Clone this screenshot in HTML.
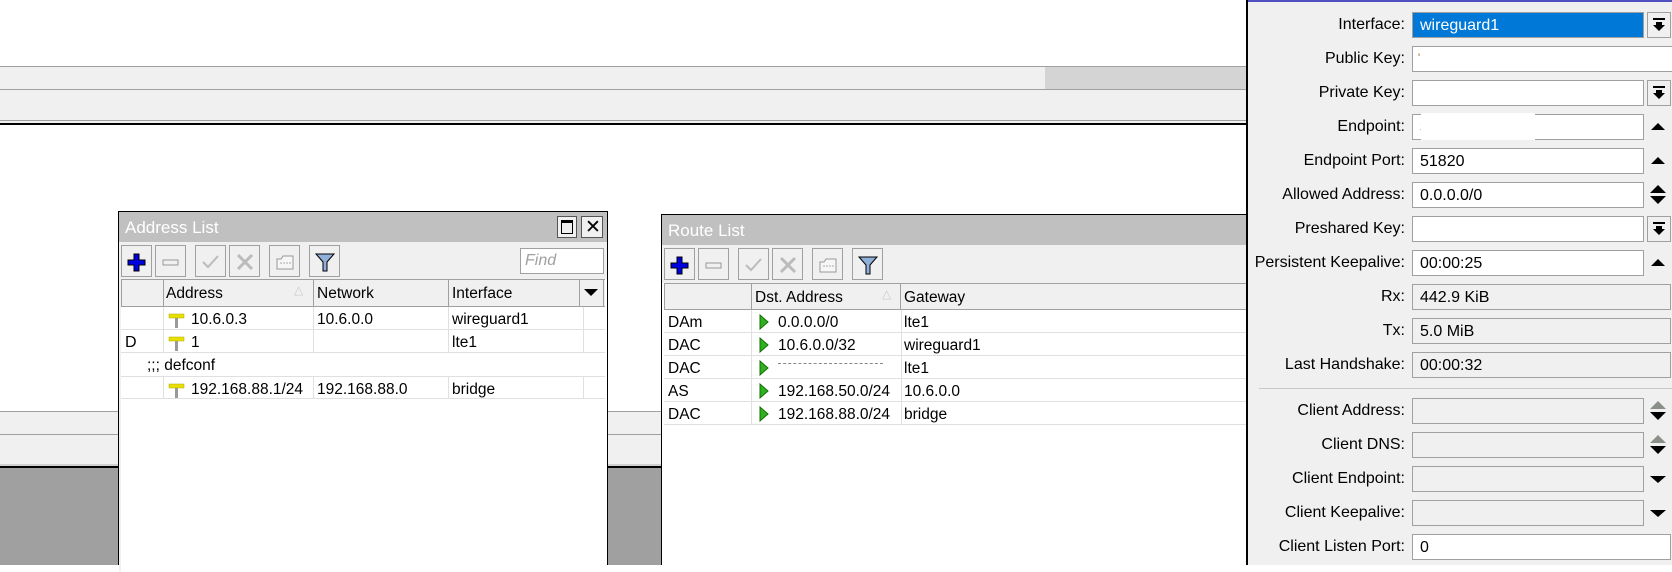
<!DOCTYPE html>
<html><head><meta charset="utf-8"><style>
*{margin:0;padding:0;box-sizing:border-box}
body{width:1672px;height:565px;position:relative;overflow:hidden;background:#fff;font-family:"Liberation Sans",sans-serif;font-size:15.5px;color:#000}
div,span{position:absolute}
.t{white-space:nowrap;line-height:1}
.btn{width:31px;height:32px;border:1px solid #a0a0a0;background:#f0f0f0}
.btn svg{position:absolute;left:4px;top:5px}
.hd{background:#f0f0f0;border-right:1px solid #a0a0a0;border-bottom:1px solid #a0a0a0;height:100%}
.lbl{right:267px;font-size:16px;white-space:nowrap;line-height:1}
.f{left:1412px;height:26px;border:1px solid #a0a0a0;background:#fff;font-size:16px;padding:4px 0 0 7px;white-space:nowrap}
.g{background:#f0f0f0}
.dd{left:1647px;width:24px;height:26px;border:1px solid #a0a0a0;background:#f0f0f0}
</style></head><body>
<div style="left:0;top:66px;width:1672px;height:1px;background:#a0a0a0"></div>
<div style="left:0;top:67px;width:1672px;height:22px;background:#f0f0f0"></div>
<div style="left:1045px;top:67px;width:210px;height:22px;background:#d4d4d4"></div>
<div style="left:0;top:89px;width:1672px;height:1px;background:#a0a0a0"></div>
<div style="left:0;top:90px;width:1672px;height:30px;background:#f0f0f0"></div>
<div style="left:0;top:120px;width:1672px;height:1px;background:#a0a0a0"></div>
<div style="left:0;top:121px;width:1672px;height:2px;background:#f0f0f0"></div>
<div style="left:0;top:123px;width:1672px;height:2px;background:#000"></div>
<div style="left:0;top:411px;width:1672px;height:1px;background:#a0a0a0"></div>
<div style="left:0;top:412px;width:1672px;height:22px;background:#f0f0f0"></div>
<div style="left:0;top:434px;width:1672px;height:1px;background:#a0a0a0"></div>
<div style="left:0;top:435px;width:1672px;height:29px;background:#f0f0f0"></div>
<div style="left:0;top:464px;width:1672px;height:2px;background:#d0d0d0"></div>
<div style="left:0;top:466px;width:1672px;height:2px;background:#000"></div>
<div style="left:0;top:468px;width:1672px;height:97px;background:#a0a0a0"></div>

<div style="left:118px;top:211px;width:490px;height:354px;border:1px solid #000;border-bottom:none;background:#fff">
 <div style="left:0;top:0;width:488px;height:30px;background:#c0c0c0"></div>
 <span class="t" style="left:6px;top:7px;font-size:17px;color:#fff">Address List</span>
 <div style="left:438px;top:4px;width:20px;height:22px;border:1px solid #555;background:#f0f0f0"><div style="left:3px;top:3px;width:12px;height:14px;border:1px solid #000;border-top-width:3px"></div></div>
 <div style="left:462px;top:4px;width:22px;height:22px;border:1px solid #555;background:#f0f0f0"><span class="t" style="left:3px;top:1px;font-size:19px">✕</span></div>
 <div style="left:0;top:30px;width:488px;height:37px;background:#f0f0f0"></div>
 <div class="btn" style="left:2px;top:33px"><svg width="22" height="22"><path d="M8 3h5v6h6v5h-6v6h-5v-6h-6v-5h6z" fill="#0000e0" stroke="#000" stroke-width="1"/></svg></div>
 <div class="btn" style="left:36px;top:33px"><svg width="22" height="22"><rect x="3" y="9" width="15" height="5" fill="#f0f0f0" stroke="#999"/></svg></div>
 <div class="btn" style="left:76px;top:33px"><svg width="22" height="22"><path d="M3 11l5 5 10-11" fill="none" stroke="#bbb" stroke-width="2"/></svg></div>
 <div class="btn" style="left:110px;top:33px"><svg width="22" height="22"><path d="M4 4l14 14M18 4L4 18" stroke="#bbb" stroke-width="3"/></svg></div>
 <div class="btn" style="left:150px;top:33px"><svg width="22" height="22"><path d="M3 8h4l2-3h10v13H3z" fill="#f6f6f6" stroke="#999"/><path d="M6 12h11" stroke="#aaa" stroke-dasharray="2 1"/></svg></div>
 <div class="btn" style="left:190px;top:33px"><svg width="22" height="22"><path d="M2 3h18l-7 8v9h-4v-9z" fill="#8fb0d8" stroke="#000"/></svg></div>
 <div style="left:401px;top:36px;width:84px;height:26px;border:1px solid #a0a0a0;background:#fff"><span class="t" style="left:4px;top:4px;font-style:italic;color:#a0a0a0;font-size:16px">Find</span></div>
 <div style="left:2px;top:67px;width:484px;height:28px;border:1px solid #a0a0a0;border-right:none;background:#f0f0f0"></div>
 <div style="left:3px;top:68px;width:42px;height:27px" class="hd"></div>
 <div style="left:45px;top:68px;width:150px;height:27px" class="hd"><span class="t" style="left:2px;top:6px">Address</span><span class="t" style="left:130px;top:4px;color:#ccc;font-size:12px">△</span></div>
 <div style="left:195px;top:68px;width:135px;height:27px" class="hd"><span class="t" style="left:3px;top:6px">Network</span></div>
 <div style="left:330px;top:68px;width:131px;height:27px" class="hd"><span class="t" style="left:3px;top:6px">Interface</span></div>
 <div style="left:461px;top:68px;width:24px;height:27px" class="hd"><svg style="position:absolute;left:4px;top:9px" width="14" height="8"><path d="M0 0h14L7 7z"/></svg></div>
 <div style="left:2px;top:117px;width:484px;height:1px;background:#e0e0e0"></div>
 <div style="left:2px;top:140px;width:484px;height:1px;background:#e0e0e0"></div>
 <div style="left:2px;top:164px;width:484px;height:1px;background:#e0e0e0"></div>
 <div style="left:2px;top:186px;width:484px;height:1px;background:#e0e0e0"></div>
 <div style="left:44px;top:95px;width:1px;height:22px;background:#e0e0e0"></div>
 <div style="left:44px;top:117px;width:1px;height:23px;background:#e0e0e0"></div>
 <div style="left:44px;top:164px;width:1px;height:23px;background:#e0e0e0"></div>
 <div style="left:194px;top:95px;width:1px;height:46px;background:#e0e0e0"></div>
 <div style="left:194px;top:164px;width:1px;height:23px;background:#e0e0e0"></div>
 <div style="left:329px;top:95px;width:1px;height:46px;background:#e0e0e0"></div>
 <div style="left:329px;top:164px;width:1px;height:23px;background:#e0e0e0"></div>
 <div style="left:464px;top:95px;width:1px;height:46px;background:#e0e0e0"></div>
 <div style="left:464px;top:164px;width:1px;height:23px;background:#e0e0e0"></div>
 <svg style="position:absolute;left:49px;top:99px" width="18" height="18"><rect x="7" y="5" width="3" height="12" fill="#999"/><rect x="1" y="3" width="15" height="4" fill="#e8e000" stroke="#b0a800" stroke-width=".5"/></svg>
 <span class="t" style="left:72px;top:100px">10.6.0.3</span><span class="t" style="left:198px;top:100px">10.6.0.0</span><span class="t" style="left:333px;top:100px">wireguard1</span>
 <span class="t" style="left:6px;top:123px;font-size:16px">D</span>
 <svg style="position:absolute;left:49px;top:122px" width="18" height="18"><rect x="7" y="5" width="3" height="12" fill="#999"/><rect x="1" y="3" width="15" height="4" fill="#e8e000" stroke="#b0a800" stroke-width=".5"/></svg>
 <span class="t" style="left:72px;top:123px">1</span><span class="t" style="left:333px;top:123px">lte1</span>
 <span class="t" style="left:28px;top:146px">;;; defconf</span>
 <svg style="position:absolute;left:49px;top:169px" width="18" height="18"><rect x="7" y="5" width="3" height="12" fill="#999"/><rect x="1" y="3" width="15" height="4" fill="#e8e000" stroke="#b0a800" stroke-width=".5"/></svg>
 <span class="t" style="left:72px;top:170px">192.168.88.1/24</span><span class="t" style="left:198px;top:170px">192.168.88.0</span><span class="t" style="left:333px;top:170px">bridge</span>
 <div style="left:0;top:30px;width:2px;height:330px;background:#f0f0f0"></div>
</div>

<div style="left:661px;top:214px;width:600px;height:351px;border:1px solid #000;border-bottom:none;background:#fff">
 <div style="left:0;top:0;width:600px;height:30px;background:#c0c0c0"></div>
 <span class="t" style="left:6px;top:7px;font-size:17px;color:#fff">Route List</span>
 <div style="left:0;top:30px;width:600px;height:38px;background:#f0f0f0"></div>
 <div class="btn" style="left:2px;top:33px"><svg width="22" height="22"><path d="M8 3h5v6h6v5h-6v6h-5v-6h-6v-5h6z" fill="#0000e0" stroke="#000" stroke-width="1"/></svg></div>
 <div class="btn" style="left:36px;top:33px"><svg width="22" height="22"><rect x="3" y="9" width="15" height="5" fill="#f0f0f0" stroke="#999"/></svg></div>
 <div class="btn" style="left:76px;top:33px"><svg width="22" height="22"><path d="M3 11l5 5 10-11" fill="none" stroke="#bbb" stroke-width="2"/></svg></div>
 <div class="btn" style="left:110px;top:33px"><svg width="22" height="22"><path d="M4 4l14 14M18 4L4 18" stroke="#bbb" stroke-width="3"/></svg></div>
 <div class="btn" style="left:150px;top:33px"><svg width="22" height="22"><path d="M3 8h4l2-3h10v13H3z" fill="#f6f6f6" stroke="#999"/><path d="M6 12h11" stroke="#aaa" stroke-dasharray="2 1"/></svg></div>
 <div class="btn" style="left:190px;top:33px"><svg width="22" height="22"><path d="M2 3h18l-7 8v9h-4v-9z" fill="#8fb0d8" stroke="#000"/></svg></div>
 <div style="left:2px;top:68px;width:598px;height:27px;border:1px solid #a0a0a0;border-right:none;background:#f0f0f0"></div>
 <div style="left:3px;top:69px;width:87px;height:26px" class="hd"></div>
 <div style="left:90px;top:69px;width:149px;height:26px" class="hd"><span class="t" style="left:3px;top:6px">Dst. Address</span><span class="t" style="left:130px;top:4px;color:#ccc;font-size:12px">△</span></div>
 <span class="t" style="left:242px;top:75px">Gateway</span>
 <div style="left:89px;top:95px;width:1px;height:115px;background:#e0e0e0"></div>
 <div style="left:239px;top:95px;width:1px;height:115px;background:#e0e0e0"></div>
 <div style="left:2px;top:117px;width:598px;height:1px;background:#e0e0e0"></div>
 <div style="left:2px;top:140px;width:598px;height:1px;background:#e0e0e0"></div>
 <div style="left:2px;top:163px;width:598px;height:1px;background:#e0e0e0"></div>
 <div style="left:2px;top:186px;width:598px;height:1px;background:#e0e0e0"></div>
 <div style="left:2px;top:209px;width:598px;height:1px;background:#e0e0e0"></div>
 <span class="t" style="left:6px;top:100px">DAm</span><svg style="position:absolute;left:97px;top:99px" width="10" height="16"><path d="M1 1l8 7-8 7z" fill="#30b020" stroke="#107000"/></svg><span class="t" style="left:116px;top:100px">0.0.0.0/0</span><span class="t" style="left:242px;top:100px">lte1</span>
 <span class="t" style="left:6px;top:123px">DAC</span><svg style="position:absolute;left:97px;top:122px" width="10" height="16"><path d="M1 1l8 7-8 7z" fill="#30b020" stroke="#107000"/></svg><span class="t" style="left:116px;top:123px">10.6.0.0/32</span><span class="t" style="left:242px;top:123px">wireguard1</span>
 <span class="t" style="left:6px;top:146px">DAC</span><svg style="position:absolute;left:97px;top:145px" width="10" height="16"><path d="M1 1l8 7-8 7z" fill="#30b020" stroke="#107000"/></svg><div style="left:116px;top:148px;width:105px;height:1px;border-top:1px dashed #888"></div><span class="t" style="left:242px;top:146px">lte1</span>
 <span class="t" style="left:6px;top:169px">AS</span><svg style="position:absolute;left:97px;top:168px" width="10" height="16"><path d="M1 1l8 7-8 7z" fill="#30b020" stroke="#107000"/></svg><span class="t" style="left:116px;top:169px">192.168.50.0/24</span><span class="t" style="left:242px;top:169px">10.6.0.0</span>
 <span class="t" style="left:6px;top:192px">DAC</span><svg style="position:absolute;left:97px;top:191px" width="10" height="16"><path d="M1 1l8 7-8 7z" fill="#30b020" stroke="#107000"/></svg><span class="t" style="left:116px;top:192px">192.168.88.0/24</span><span class="t" style="left:242px;top:192px">bridge</span>
</div>

<div style="left:1246px;top:0;width:426px;height:565px;background:#f0f0f0;border-left:2px solid #000"></div>
<div style="left:1248px;top:0;width:424px;height:2px;background:#5050c0"></div>
<span class="lbl" style="top:17px">Interface:</span>
<div class="f" style="top:12px;width:232px;background:#0078d7;color:#fff;border-color:#a0a0a0">wireguard1</div>
<div class="dd" style="top:12px"><svg style="position:absolute;left:5px;top:5px" width="12" height="14"><rect x="0" y="0" width="12" height="2"/><path d="M3 4h6v3h3l-6 6-6-6h3z"/></svg></div>
<span class="lbl" style="top:51px">Public Key:</span>
<div class="f" style="top:46px;width:260px;border-right:none"><span class="t" style="left:5px;top:6px;font-size:11px;color:#a06000">'</span></div>
<span class="lbl" style="top:85px">Private Key:</span>
<div class="f" style="top:80px;width:232px"></div>
<div class="dd" style="top:80px"><svg style="position:absolute;left:5px;top:5px" width="12" height="14"><rect x="0" y="0" width="12" height="2"/><path d="M3 4h6v3h3l-6 6-6-6h3z"/></svg></div>
<span class="lbl" style="top:119px">Endpoint:</span>
<div class="f" style="top:114px;width:232px">3</div>
<div style="left:1421px;top:113px;width:114px;height:27px;background:#fff"></div>
<svg style="position:absolute;left:1651px;top:122px" width="14" height="10"><path d="M0 8h14L7 1z"/></svg>
<span class="lbl" style="top:153px">Endpoint Port:</span>
<div class="f" style="top:148px;width:232px">51820</div>
<svg style="position:absolute;left:1651px;top:156px" width="14" height="10"><path d="M0 8h14L7 1z"/></svg>
<span class="lbl" style="top:187px">Allowed Address:</span>
<div class="f" style="top:182px;width:232px">0.0.0.0/0</div>
<svg style="position:absolute;left:1650px;top:184px" width="16" height="22"><path d="M0 9h16L8 1zM0 12h16L8 20z"/></svg>
<span class="lbl" style="top:221px">Preshared Key:</span>
<div class="f" style="top:216px;width:232px"></div>
<div class="dd" style="top:216px"><svg style="position:absolute;left:5px;top:5px" width="12" height="14"><rect x="0" y="0" width="12" height="2"/><path d="M3 4h6v3h3l-6 6-6-6h3z"/></svg></div>
<span class="lbl" style="top:255px">Persistent Keepalive:</span>
<div class="f" style="top:250px;width:232px">00:00:25</div>
<svg style="position:absolute;left:1651px;top:258px" width="14" height="10"><path d="M0 8h14L7 1z"/></svg>
<span class="lbl" style="top:289px">Rx:</span>
<div class="f g" style="top:284px;width:259px">442.9 KiB</div>
<span class="lbl" style="top:323px">Tx:</span>
<div class="f g" style="top:318px;width:259px">5.0 MiB</div>
<span class="lbl" style="top:357px">Last Handshake:</span>
<div class="f g" style="top:352px;width:259px">00:00:32</div>
<div style="left:1259px;top:388px;width:413px;height:1px;background:#c8c8c8"></div>
<span class="lbl" style="top:403px">Client Address:</span>
<div class="f g" style="top:398px;width:232px"></div>
<svg style="position:absolute;left:1650px;top:400px" width="16" height="22"><path d="M0 9h16L8 1z" fill="#8a9088"/><path d="M0 12h16L8 20z"/></svg>
<span class="lbl" style="top:437px">Client DNS:</span>
<div class="f g" style="top:432px;width:232px"></div>
<svg style="position:absolute;left:1650px;top:434px" width="16" height="22"><path d="M0 9h16L8 1z" fill="#8a9088"/><path d="M0 12h16L8 20z"/></svg>
<span class="lbl" style="top:471px">Client Endpoint:</span>
<div class="f g" style="top:466px;width:232px"></div>
<svg style="position:absolute;left:1650px;top:475px" width="16" height="9"><path d="M0 1h16L8 8z"/></svg>
<span class="lbl" style="top:505px">Client Keepalive:</span>
<div class="f g" style="top:500px;width:232px"></div>
<svg style="position:absolute;left:1650px;top:509px" width="16" height="9"><path d="M0 1h16L8 8z"/></svg>
<span class="lbl" style="top:539px">Client Listen Port:</span>
<div class="f" style="top:534px;width:259px">0</div>
</body></html>
